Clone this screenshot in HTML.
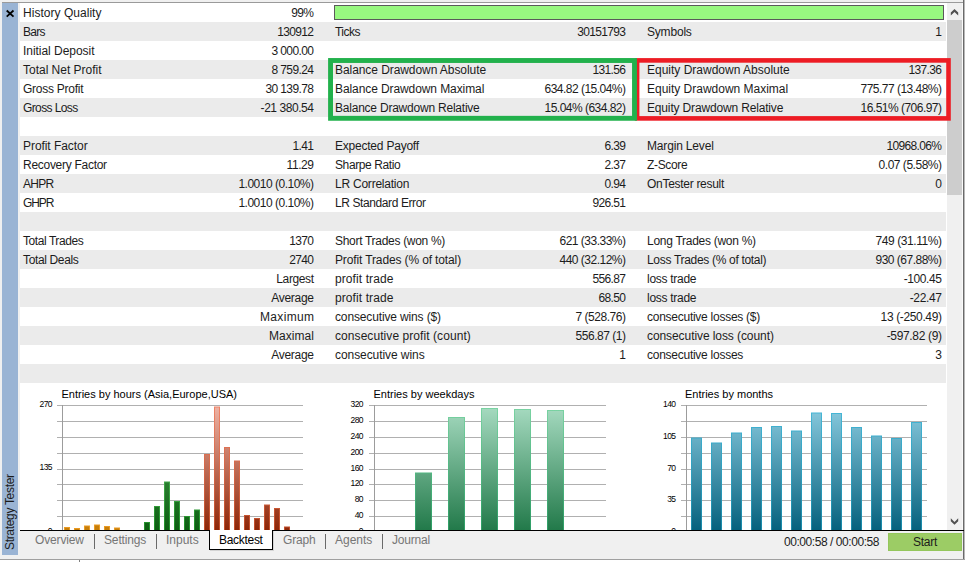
<!DOCTYPE html>
<html><head><meta charset="utf-8"><title>Strategy Tester</title>
<style>
html,body{margin:0;padding:0}
body{width:965px;height:562px;background:#f0f0f0;position:relative;overflow:hidden;font-family:"Liberation Sans",sans-serif;font-size:12px;color:#1c1c1c}
.abs{position:absolute}
.row{position:absolute;left:20px;width:926px;height:19px;line-height:19px;white-space:nowrap}
.g{background:#ebebeb}
.w{background:#fff}
.row span{position:absolute;top:1px}
.l1{left:3px}.l2{left:315px}.l3{left:627px}
.v1{right:632px}.v2{right:320px}.v3{right:4px}
.n{letter-spacing:-0.6px}
.tab{position:absolute;top:532px;height:17px;line-height:17px;color:#767676;font-size:12px;white-space:nowrap}
.sep{position:absolute;top:534px;width:1px;height:15px;background:#6a6a6a}
svg text{font-family:"Liberation Sans",sans-serif}
</style></head><body>
<div class="abs" style="left:2px;top:2px;width:962px;height:1px;background:#9a9a9a"></div>
<div class="abs" style="left:2px;top:3px;width:16px;height:552px;background:#9ab4d4"></div>
<div class="abs" style="left:20px;top:383px;width:926px;height:147px;background:#fff"></div>

<div class="row w" style="top:3px"><span class="l1" style="letter-spacing:0.03px">History Quality</span><span class="v1" style="letter-spacing:-0.68px;margin-right:0.68px">99%</span></div>
<div class="row g" style="top:22px"><span class="l1" style="letter-spacing:-0.75px">Bars</span><span class="v1" style="letter-spacing:-0.67px;margin-right:0.67px">130912</span><span class="l2" style="letter-spacing:-0.53px">Ticks</span><span class="v2" style="letter-spacing:-0.67px;margin-right:0.67px">30151793</span><span class="l3" style="letter-spacing:-0.19px">Symbols</span><span class="v3" style="letter-spacing:-0.69px;margin-right:0.69px">1</span></div>
<div class="row w" style="top:41px"><span class="l1" style="letter-spacing:-0.04px">Initial Deposit</span><span class="v1" style="letter-spacing:-0.59px;margin-right:0.59px">3 000.00</span></div>
<div class="row g" style="top:60px"><span class="l1" style="letter-spacing:-0.01px">Total Net Profit</span><span class="v1" style="letter-spacing:-0.59px;margin-right:0.59px">8 759.24</span><span class="l2" style="letter-spacing:-0.07px">Balance Drawdown Absolute</span><span class="v2" style="letter-spacing:-0.62px;margin-right:0.62px">131.56</span><span class="l3" style="letter-spacing:-0.00px">Equity Drawdown Absolute</span><span class="v3" style="letter-spacing:-0.62px;margin-right:0.62px">137.36</span></div>
<div class="row w" style="top:79px"><span class="l1" style="letter-spacing:-0.25px">Gross Profit</span><span class="v1" style="letter-spacing:-0.60px;margin-right:0.60px">30 139.78</span><span class="l2" style="letter-spacing:-0.09px">Balance Drawdown Maximal</span><span class="v2" style="letter-spacing:-0.52px;margin-right:0.52px">634.82 (15.04%)</span><span class="l3" style="letter-spacing:-0.01px">Equity Drawdown Maximal</span><span class="v3" style="letter-spacing:-0.52px;margin-right:0.52px">775.77 (13.48%)</span></div>
<div class="row g" style="top:98px"><span class="l1" style="letter-spacing:-0.61px">Gross Loss</span><span class="v1" style="letter-spacing:-0.44px;margin-right:0.44px">-21 380.54</span><span class="l2" style="letter-spacing:-0.22px">Balance Drawdown Relative</span><span class="v2" style="letter-spacing:-0.52px;margin-right:0.52px">15.04% (634.82)</span><span class="l3" style="letter-spacing:-0.16px">Equity Drawdown Relative</span><span class="v3" style="letter-spacing:-0.52px;margin-right:0.52px">16.51% (706.97)</span></div>
<div class="row w" style="top:117px"></div>
<div class="row g" style="top:136px"><span class="l1" style="letter-spacing:-0.06px">Profit Factor</span><span class="v1" style="letter-spacing:-0.59px;margin-right:0.59px">1.41</span><span class="l2" style="letter-spacing:-0.22px">Expected Payoff</span><span class="v2" style="letter-spacing:-0.59px;margin-right:0.59px">6.39</span><span class="l3" style="letter-spacing:-0.17px">Margin Level</span><span class="v3" style="letter-spacing:-0.64px;margin-right:0.64px">10968.06%</span></div>
<div class="row w" style="top:155px"><span class="l1" style="letter-spacing:-0.28px">Recovery Factor</span><span class="v1" style="letter-spacing:-0.43px;margin-right:0.43px">11.29</span><span class="l2" style="letter-spacing:-0.40px">Sharpe Ratio</span><span class="v2" style="letter-spacing:-0.59px;margin-right:0.59px">2.37</span><span class="l3" style="letter-spacing:-0.33px">Z-Score</span><span class="v3" style="letter-spacing:-0.48px;margin-right:0.48px">0.07 (5.58%)</span></div>
<div class="row g" style="top:174px"><span class="l1" style="letter-spacing:-0.74px">AHPR</span><span class="v1" style="letter-spacing:-0.50px;margin-right:0.50px">1.0010 (0.10%)</span><span class="l2" style="letter-spacing:-0.23px">LR Correlation</span><span class="v2" style="letter-spacing:-0.59px;margin-right:0.59px">0.94</span><span class="l3" style="letter-spacing:-0.29px">OnTester result</span><span class="v3" style="letter-spacing:-0.69px;margin-right:0.69px">0</span></div>
<div class="row w" style="top:193px"><span class="l1" style="letter-spacing:-1.07px">GHPR</span><span class="v1" style="letter-spacing:-0.50px;margin-right:0.50px">1.0010 (0.10%)</span><span class="l2" style="letter-spacing:-0.40px">LR Standard Error</span><span class="v2" style="letter-spacing:-0.62px;margin-right:0.62px">926.51</span></div>
<div class="row g" style="top:212px"></div>
<div class="row w" style="top:231px"><span class="l1" style="letter-spacing:-0.43px">Total Trades</span><span class="v1" style="letter-spacing:-0.68px;margin-right:0.68px">1370</span><span class="l2" style="letter-spacing:-0.30px">Short Trades (won %)</span><span class="v2" style="letter-spacing:-0.50px;margin-right:0.50px">621 (33.33%)</span><span class="l3" style="letter-spacing:-0.28px">Long Trades (won %)</span><span class="v3" style="letter-spacing:-0.43px;margin-right:0.43px">749 (31.11%)</span></div>
<div class="row g" style="top:250px"><span class="l1" style="letter-spacing:-0.36px">Total Deals</span><span class="v1" style="letter-spacing:-0.68px;margin-right:0.68px">2740</span><span class="l2" style="letter-spacing:-0.13px">Profit Trades (% of total)</span><span class="v2" style="letter-spacing:-0.50px;margin-right:0.50px">440 (32.12%)</span><span class="l3" style="letter-spacing:-0.31px">Loss Trades (% of total)</span><span class="v3" style="letter-spacing:-0.50px;margin-right:0.50px">930 (67.88%)</span></div>
<div class="row w" style="top:269px"><span class="v1" style="letter-spacing:-0.39px;margin-right:0.39px">Largest</span><span class="l2" style="letter-spacing:0.09px">profit trade</span><span class="v2" style="letter-spacing:-0.62px;margin-right:0.62px">556.87</span><span class="l3" style="letter-spacing:-0.28px">loss trade</span><span class="v3" style="letter-spacing:-0.39px;margin-right:0.39px">-100.45</span></div>
<div class="row g" style="top:288px"><span class="v1" style="letter-spacing:-0.30px;margin-right:0.30px">Average</span><span class="l2" style="letter-spacing:0.09px">profit trade</span><span class="v2" style="letter-spacing:-0.61px;margin-right:0.61px">68.50</span><span class="l3" style="letter-spacing:-0.28px">loss trade</span><span class="v3" style="letter-spacing:-0.34px;margin-right:0.34px">-22.47</span></div>
<div class="row w" style="top:307px"><span class="v1" style="letter-spacing:0.34px;margin-right:-0.34px">Maximum</span><span class="l2" style="letter-spacing:-0.14px">consecutive wins ($)</span><span class="v2" style="letter-spacing:-0.47px;margin-right:0.47px">7 (528.76)</span><span class="l3" style="letter-spacing:-0.26px">consecutive losses ($)</span><span class="v3" style="letter-spacing:-0.36px;margin-right:0.36px">13 (-250.49)</span></div>
<div class="row g" style="top:326px"><span class="v1" style="letter-spacing:0.06px;margin-right:-0.06px">Maximal</span><span class="l2" style="letter-spacing:0.07px">consecutive profit (count)</span><span class="v2" style="letter-spacing:-0.47px;margin-right:0.47px">556.87 (1)</span><span class="l3" style="letter-spacing:-0.08px">consecutive loss (count)</span><span class="v3" style="letter-spacing:-0.34px;margin-right:0.34px">-597.82 (9)</span></div>
<div class="row w" style="top:345px"><span class="v1" style="letter-spacing:-0.30px;margin-right:0.30px">Average</span><span class="l2" style="letter-spacing:-0.07px">consecutive wins</span><span class="v2" style="letter-spacing:-0.69px;margin-right:0.69px">1</span><span class="l3" style="letter-spacing:-0.26px">consecutive losses</span><span class="v3" style="letter-spacing:-0.69px;margin-right:0.69px">3</span></div>
<div class="row g" style="top:364px"></div>
<svg class="abs" style="left:0px;top:0px" width="20" height="22" viewBox="0 0 20 22"><path d="M6.7 10.5 L13.5 16.7 M13.5 10.5 L6.7 16.7" stroke="#000" stroke-width="1.8" fill="none"/></svg>
<div class="abs" style="left:334px;top:5px;width:608px;height:13px;background:#98f880;border:1px solid #5a5a5a"></div>
<div class="abs" style="left:946px;top:3px;width:1px;height:527px;background:#fff"></div>
<div class="abs" style="left:947px;top:3px;width:15px;height:526px;background:#f0f0f0"></div>
<div class="abs" style="left:962px;top:3px;width:1px;height:527px;background:#fafafa"></div>
<div class="abs" style="left:947px;top:20px;width:15px;height:175px;background:#cdcdcd"></div>
<svg class="abs" style="left:947px;top:3px" width="15" height="17" viewBox="0 0 15 17"><path d="M3.8 9.6 L7.5 6 L11.2 9.6 L11.2 12.5 L7.5 8.9 L3.8 12.5 Z" fill="#505050"/></svg>
<svg class="abs" style="left:947px;top:513px" width="15" height="17" viewBox="0 0 15 17"><path d="M3.8 8.2 L7.5 11.8 L11.2 8.2 L11.2 5.3 L7.5 8.9 L3.8 5.3 Z" fill="#505050"/></svg>
<svg class="abs" style="left:320px;top:50px" width="640" height="80" viewBox="320 50 640 80"><rect x="637.1" y="60.4" width="311.4" height="58" fill="none" stroke="#ed1c24" stroke-width="4.6"/><rect x="330.55" y="60.5" width="303.95" height="57.8" fill="none" stroke="#22b14c" stroke-width="4.9"/></svg>
<div class="abs" style="left:963px;top:0px;width:1px;height:562px;background:#6a6a6a"></div><div class="abs" style="left:964px;top:0px;width:1px;height:562px;background:#b8b8b8"></div>
<svg class="abs" style="left:20px;top:383px" width="926" height="147" viewBox="20 383 926 147">
<defs><linearGradient id="gO" gradientUnits="userSpaceOnUse" x1="0" y1="405" x2="0" y2="532"><stop offset="0" stop-color="#e8a838"/><stop offset="1" stop-color="#c47c08"/></linearGradient><linearGradient id="bO" gradientUnits="userSpaceOnUse" x1="0" y1="405" x2="0" y2="532"><stop offset="0" stop-color="#ffc050"/><stop offset="1" stop-color="#e89820"/></linearGradient><linearGradient id="gG" gradientUnits="userSpaceOnUse" x1="0" y1="405" x2="0" y2="532"><stop offset="0" stop-color="#58b060"/><stop offset="1" stop-color="#0c5c10"/></linearGradient><linearGradient id="bG" gradientUnits="userSpaceOnUse" x1="0" y1="405" x2="0" y2="532"><stop offset="0" stop-color="#70c878"/><stop offset="1" stop-color="#209028"/></linearGradient><linearGradient id="gR" gradientUnits="userSpaceOnUse" x1="0" y1="405" x2="0" y2="532"><stop offset="0" stop-color="#eeb4a6"/><stop offset="1" stop-color="#8c2406"/></linearGradient><linearGradient id="bR" gradientUnits="userSpaceOnUse" x1="0" y1="405" x2="0" y2="532"><stop offset="0" stop-color="#ee8468"/><stop offset="1" stop-color="#c04c28"/></linearGradient><linearGradient id="gW" gradientUnits="userSpaceOnUse" x1="0" y1="405" x2="0" y2="532"><stop offset="0" stop-color="#a8dcc2"/><stop offset="1" stop-color="#207848"/></linearGradient><linearGradient id="bW" gradientUnits="userSpaceOnUse" x1="0" y1="405" x2="0" y2="532"><stop offset="0" stop-color="#7cd4a4"/><stop offset="1" stop-color="#2c9c64"/></linearGradient><linearGradient id="gM" gradientUnits="userSpaceOnUse" x1="0" y1="405" x2="0" y2="532"><stop offset="0" stop-color="#8ccce0"/><stop offset="1" stop-color="#04607c"/></linearGradient><linearGradient id="bM" gradientUnits="userSpaceOnUse" x1="0" y1="405" x2="0" y2="532"><stop offset="0" stop-color="#48b8d8"/><stop offset="1" stop-color="#1888a8"/></linearGradient></defs>
<rect x="57" y="405" width="246" height="1" fill="#b0b0b0"/><rect x="57" y="421" width="246" height="1" fill="#b0b0b0"/><rect x="57" y="437" width="246" height="1" fill="#b0b0b0"/><rect x="57" y="453" width="246" height="1" fill="#b0b0b0"/><rect x="57" y="469" width="246" height="1" fill="#b0b0b0"/><rect x="57" y="484" width="246" height="1" fill="#b0b0b0"/><rect x="57" y="500" width="246" height="1" fill="#b0b0b0"/><rect x="57" y="516" width="246" height="1" fill="#b0b0b0"/><rect x="57" y="532" width="246" height="1" fill="#b0b0b0"/><rect x="62" y="405" width="1" height="128" fill="#9c9c9c"/>
<text x="61.5" y="398" font-size="11">Entries by hours (Asia,Europe,USA)</text>
<text x="52" y="407" font-size="8.5" text-anchor="end" letter-spacing="-0.6">270</text><text x="52" y="470" font-size="8.5" text-anchor="end" letter-spacing="-0.6">135</text><text x="52" y="534" font-size="8.5" text-anchor="end" letter-spacing="-0.6">0</text>
<rect x="64" y="527.0" width="6" height="5.0" fill="url(#bO)"/><rect x="65" y="528.0" width="4" height="4.0" fill="url(#gO)"/>
<rect x="74" y="528.0" width="6" height="4.0" fill="url(#bO)"/><rect x="75" y="529.0" width="4" height="3.0" fill="url(#gO)"/>
<rect x="84" y="525.5" width="6" height="6.5" fill="url(#bO)"/><rect x="85" y="526.5" width="4" height="5.5" fill="url(#gO)"/>
<rect x="94" y="524.5" width="6" height="7.5" fill="url(#bO)"/><rect x="95" y="525.5" width="4" height="6.5" fill="url(#gO)"/>
<rect x="104" y="526.0" width="6" height="6.0" fill="url(#bO)"/><rect x="105" y="527.0" width="4" height="5.0" fill="url(#gO)"/>
<rect x="114" y="527.5" width="6" height="4.5" fill="url(#bO)"/><rect x="115" y="528.5" width="4" height="3.5" fill="url(#gO)"/>
<rect x="144" y="522.0" width="6" height="10.0" fill="url(#bG)"/><rect x="145" y="523.0" width="4" height="9.0" fill="url(#gG)"/>
<rect x="154" y="506.0" width="6" height="26.0" fill="url(#bG)"/><rect x="155" y="507.0" width="4" height="25.0" fill="url(#gG)"/>
<rect x="164" y="481.5" width="6" height="50.5" fill="url(#bG)"/><rect x="165" y="482.5" width="4" height="49.5" fill="url(#gG)"/>
<rect x="174" y="501.0" width="6" height="31.0" fill="url(#bG)"/><rect x="175" y="502.0" width="4" height="30.0" fill="url(#gG)"/>
<rect x="184" y="516.0" width="6" height="16.0" fill="url(#bG)"/><rect x="185" y="517.0" width="4" height="15.0" fill="url(#gG)"/>
<rect x="194" y="509.5" width="6" height="22.5" fill="url(#bG)"/><rect x="195" y="510.5" width="4" height="21.5" fill="url(#gG)"/>
<rect x="204" y="454.0" width="6" height="78.0" fill="url(#bR)"/><rect x="205" y="455.0" width="4" height="77.0" fill="url(#gR)"/>
<rect x="214" y="406.5" width="6" height="125.5" fill="url(#bR)"/><rect x="215" y="407.5" width="4" height="124.5" fill="url(#gR)"/>
<rect x="224" y="447.0" width="6" height="85.0" fill="url(#bR)"/><rect x="225" y="448.0" width="4" height="84.0" fill="url(#gR)"/>
<rect x="234" y="460.5" width="6" height="71.5" fill="url(#bR)"/><rect x="235" y="461.5" width="4" height="70.5" fill="url(#gR)"/>
<rect x="244" y="515.0" width="6" height="17.0" fill="url(#bR)"/><rect x="245" y="516.0" width="4" height="16.0" fill="url(#gR)"/>
<rect x="254" y="518.0" width="6" height="14.0" fill="url(#bR)"/><rect x="255" y="519.0" width="4" height="13.0" fill="url(#gR)"/>
<rect x="264" y="504.5" width="6" height="27.5" fill="url(#bR)"/><rect x="265" y="505.5" width="4" height="26.5" fill="url(#gR)"/>
<rect x="274" y="508.0" width="6" height="24.0" fill="url(#bR)"/><rect x="275" y="509.0" width="4" height="23.0" fill="url(#gR)"/>
<rect x="284" y="526.5" width="6" height="5.5" fill="url(#bR)"/><rect x="285" y="527.5" width="4" height="4.5" fill="url(#gR)"/>
<rect x="369" y="405" width="237" height="1" fill="#b0b0b0"/><rect x="369" y="421" width="237" height="1" fill="#b0b0b0"/><rect x="369" y="437" width="237" height="1" fill="#b0b0b0"/><rect x="369" y="453" width="237" height="1" fill="#b0b0b0"/><rect x="369" y="469" width="237" height="1" fill="#b0b0b0"/><rect x="369" y="484" width="237" height="1" fill="#b0b0b0"/><rect x="369" y="500" width="237" height="1" fill="#b0b0b0"/><rect x="369" y="516" width="237" height="1" fill="#b0b0b0"/><rect x="369" y="532" width="237" height="1" fill="#b0b0b0"/><rect x="374" y="405" width="1" height="128" fill="#9c9c9c"/>
<text x="373.5" y="398" font-size="11">Entries by weekdays</text>
<text x="363" y="407" font-size="8.5" text-anchor="end" letter-spacing="-0.6">320</text>
<text x="363" y="423" font-size="8.5" text-anchor="end" letter-spacing="-0.6">280</text>
<text x="363" y="439" font-size="8.5" text-anchor="end" letter-spacing="-0.6">240</text>
<text x="363" y="455" font-size="8.5" text-anchor="end" letter-spacing="-0.6">200</text>
<text x="363" y="471" font-size="8.5" text-anchor="end" letter-spacing="-0.6">160</text>
<text x="363" y="486" font-size="8.5" text-anchor="end" letter-spacing="-0.6">120</text>
<text x="363" y="502" font-size="8.5" text-anchor="end" letter-spacing="-0.6">80</text>
<text x="363" y="518" font-size="8.5" text-anchor="end" letter-spacing="-0.6">40</text>
<text x="363" y="534" font-size="8.5" text-anchor="end" letter-spacing="-0.6">0</text>
<rect x="415" y="472.5" width="17" height="59.5" fill="url(#bW)"/><rect x="416" y="473.5" width="15" height="58.5" fill="url(#gW)"/>
<rect x="448" y="417.0" width="17" height="115.0" fill="url(#bW)"/><rect x="449" y="418.0" width="15" height="114.0" fill="url(#gW)"/>
<rect x="481" y="408.0" width="17" height="124.0" fill="url(#bW)"/><rect x="482" y="409.0" width="15" height="123.0" fill="url(#gW)"/>
<rect x="514" y="409.0" width="17" height="123.0" fill="url(#bW)"/><rect x="515" y="410.0" width="15" height="122.0" fill="url(#gW)"/>
<rect x="547" y="410.0" width="17" height="122.0" fill="url(#bW)"/><rect x="548" y="411.0" width="15" height="121.0" fill="url(#gW)"/>
<rect x="681" y="405" width="246" height="1" fill="#b0b0b0"/><rect x="681" y="421" width="246" height="1" fill="#b0b0b0"/><rect x="681" y="437" width="246" height="1" fill="#b0b0b0"/><rect x="681" y="453" width="246" height="1" fill="#b0b0b0"/><rect x="681" y="469" width="246" height="1" fill="#b0b0b0"/><rect x="681" y="484" width="246" height="1" fill="#b0b0b0"/><rect x="681" y="500" width="246" height="1" fill="#b0b0b0"/><rect x="681" y="516" width="246" height="1" fill="#b0b0b0"/><rect x="681" y="532" width="246" height="1" fill="#b0b0b0"/><rect x="686" y="405" width="1" height="128" fill="#9c9c9c"/>
<text x="685" y="398" font-size="11">Entries by months</text>
<text x="675.5" y="407" font-size="8.5" text-anchor="end" letter-spacing="-0.6">140</text>
<text x="675.5" y="439" font-size="8.5" text-anchor="end" letter-spacing="-0.6">105</text>
<text x="675.5" y="471" font-size="8.5" text-anchor="end" letter-spacing="-0.6">70</text>
<text x="675.5" y="502" font-size="8.5" text-anchor="end" letter-spacing="-0.6">35</text>
<text x="675.5" y="534" font-size="8.5" text-anchor="end" letter-spacing="-0.6">0</text>
<rect x="691" y="437.5" width="11" height="94.5" fill="url(#bM)"/><rect x="692" y="438.5" width="9" height="93.5" fill="url(#gM)"/>
<rect x="711" y="442.5" width="11" height="89.5" fill="url(#bM)"/><rect x="712" y="443.5" width="9" height="88.5" fill="url(#gM)"/>
<rect x="731" y="432.5" width="11" height="99.5" fill="url(#bM)"/><rect x="732" y="433.5" width="9" height="98.5" fill="url(#gM)"/>
<rect x="751" y="427.0" width="11" height="105.0" fill="url(#bM)"/><rect x="752" y="428.0" width="9" height="104.0" fill="url(#gM)"/>
<rect x="771" y="426.0" width="11" height="106.0" fill="url(#bM)"/><rect x="772" y="427.0" width="9" height="105.0" fill="url(#gM)"/>
<rect x="791" y="430.5" width="11" height="101.5" fill="url(#bM)"/><rect x="792" y="431.5" width="9" height="100.5" fill="url(#gM)"/>
<rect x="811" y="412.5" width="11" height="119.5" fill="url(#bM)"/><rect x="812" y="413.5" width="9" height="118.5" fill="url(#gM)"/>
<rect x="831" y="413.0" width="11" height="119.0" fill="url(#bM)"/><rect x="832" y="414.0" width="9" height="118.0" fill="url(#gM)"/>
<rect x="851" y="427.0" width="11" height="105.0" fill="url(#bM)"/><rect x="852" y="428.0" width="9" height="104.0" fill="url(#gM)"/>
<rect x="871" y="435.5" width="11" height="96.5" fill="url(#bM)"/><rect x="872" y="436.5" width="9" height="95.5" fill="url(#gM)"/>
<rect x="891" y="438.0" width="11" height="94.0" fill="url(#bM)"/><rect x="892" y="439.0" width="9" height="93.0" fill="url(#gM)"/>
<rect x="911" y="422.0" width="11" height="110.0" fill="url(#bM)"/><rect x="912" y="423.0" width="9" height="109.0" fill="url(#gM)"/>
</svg>
<div class="abs" style="left:20px;top:530px;width:944px;height:1px;background:#000"></div>
<div class="abs" style="left:20px;top:531px;width:943px;height:24px;background:#f0f0f0"></div>
<div class="abs" style="left:209px;top:530px;width:62px;height:19px;background:#fff;border:1px solid #000;border-top:none;box-shadow:1px 1px 0 #d4d4d4"></div>
<div class="tab" style="left:35px;letter-spacing:-0.15px">Overview</div>
<div class="tab" style="left:104px;letter-spacing:-0.15px">Settings</div>
<div class="tab" style="left:166px;letter-spacing:0px">Inputs</div>
<div class="tab" style="left:283px;letter-spacing:-0.2px">Graph</div>
<div class="tab" style="left:335px;letter-spacing:0px">Agents</div>
<div class="tab" style="left:392px;letter-spacing:-0.2px">Journal</div>
<div class="tab" style="left:219px;color:#000;letter-spacing:-0.3px">Backtest</div>
<div class="sep" style="left:94px"></div>
<div class="sep" style="left:156px"></div>
<div class="sep" style="left:325px"></div>
<div class="sep" style="left:382px"></div>
<div class="abs" style="left:784px;top:533px;height:19px;line-height:19px;white-space:nowrap;letter-spacing:-0.44px">00:00:58 / 00:00:58</div>
<div class="abs" style="left:888px;top:533px;width:74px;height:18px;line-height:18px;background:#9ccc65;box-shadow:inset 0 0 0 1px #94c65c;text-align:center;letter-spacing:-0.3px">Start</div>
<div class="abs" style="left:3px;top:550px;width:80px;height:14px;line-height:14px;transform-origin:0 0;transform:rotate(-90deg);white-space:nowrap;letter-spacing:-0.32px">Strategy Tester</div>
<div class="abs" style="left:0;top:559px;width:965px;height:1px;background:#a0a0a0"></div>
<div class="abs" style="left:0;top:560px;width:965px;height:2px;background:#fff"></div>
<div class="abs" style="left:79px;top:560px;width:1px;height:2px;background:#808080"></div>
</body></html>
